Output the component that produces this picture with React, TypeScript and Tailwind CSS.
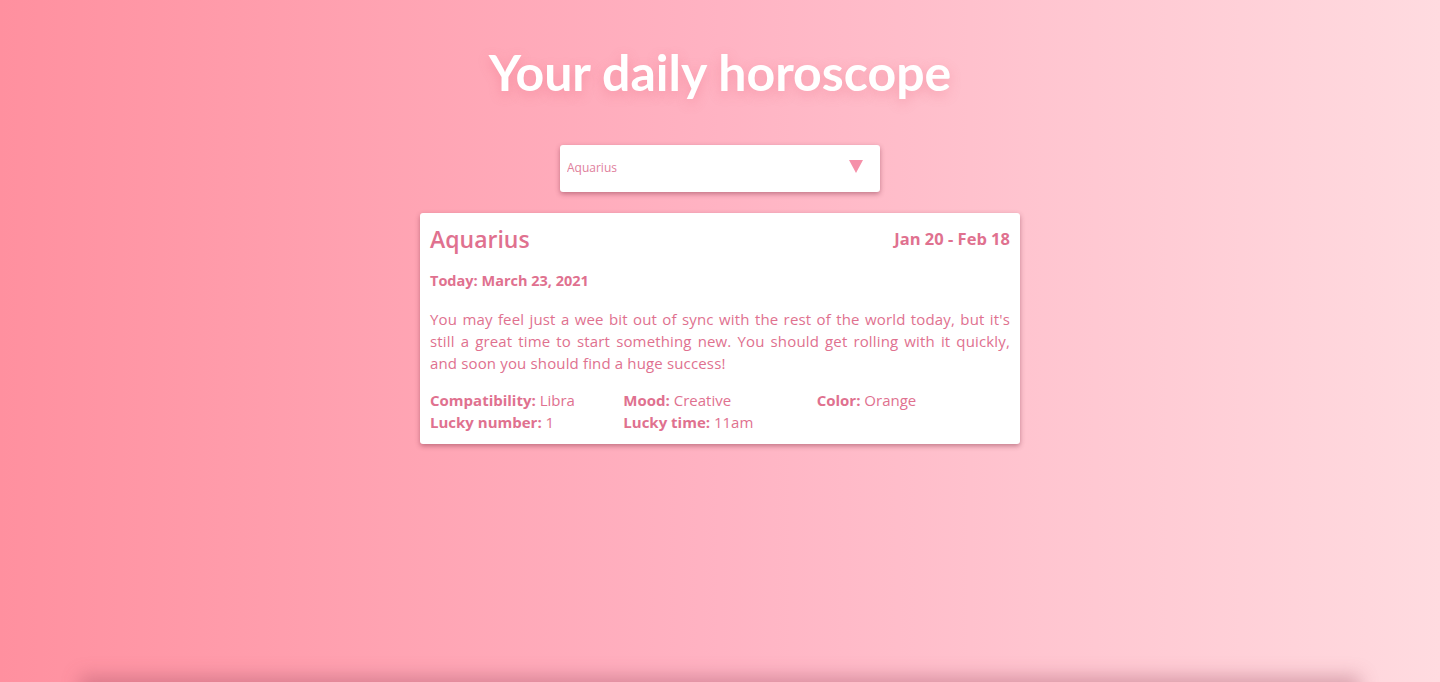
import { useState } from "react";

const signs = [
  "Aries", "Taurus", "Gemini", "Cancer", "Leo", "Virgo",
  "Libra", "Scorpio", "Sagittarius", "Capricorn", "Aquarius", "Pisces",
];

const App = () => {
  const [sign, setSign] = useState("Aquarius");

  return (
    <div
      style={{ fontFamily: "'Open Sans', 'Noto Sans', sans-serif" }}
      className="min-h-screen w-full bg-linear-to-r from-[#ff909f] via-[#ffb3c3] to-[#ffdbe0] text-[#e0718f]"
    >
      <div className="h-[682px] flex flex-col items-center pt-[43px]">
        <h1
          style={{ fontFamily: "Lato, sans-serif" }}
          className="text-[50px] font-bold leading-[58px] text-white [text-shadow:0_4px_12px_rgba(230,100,120,0.35)]"
        >
          Your daily horoscope
        </h1>

        {/* Select */}
        <div className="relative mt-[44px] w-[320px] h-[47px] bg-white rounded-[3px] shadow-[0_2px_5px_rgba(120,40,60,0.45)]">
          <select
            value={sign}
            onChange={(e) => setSign(e.target.value)}
            className="appearance-none w-full h-full bg-transparent pl-[7px] pb-[2px] text-[12px] text-[#e0809c] outline-none"
          >
            {signs.map((s) => (
              <option key={s}>{s}</option>
            ))}
          </select>
          <span className="pointer-events-none absolute right-[17px] top-[15px] w-0 h-0 border-l-[7px] border-r-[7px] border-t-[13px] border-l-transparent border-r-transparent border-t-[#f590a9]" />
        </div>

        {/* Card */}
        <div className="mt-[21px] w-[600px] bg-white rounded-[3px] shadow-[0_2px_5px_rgba(120,40,60,0.45)] px-[10px] pt-[11px] pb-[11px]">
          <div className="flex items-center justify-between">
            <h2 className="text-[23px] font-semibold leading-[30px]">{sign}</h2>
            <span className="text-[16.5px] font-bold">Jan 20 - Feb 18</span>
          </div>
          <p className="mt-[16px] text-[14.5px] font-bold leading-[22px]">Today: March 23, 2021</p>
          <p className="mt-[16px] text-[15px] leading-[22px] text-justify tracking-[0.15px]">
            You may feel just a wee bit out of sync with the rest of the world today, but it's still a great time
            to start something new. You should get rolling with it quickly, and soon you should find a huge success!
          </p>
          <div className="mt-[15px] grid grid-cols-3 w-[580px] text-[15px] leading-[22px]">
            <div><b>Compatibility:</b> Libra</div>
            <div><b>Mood:</b> Creative</div>
            <div><b>Color:</b> Orange</div>
            <div><b>Lucky number:</b> 1</div>
            <div><b>Lucky time:</b> 11am</div>
          </div>
        </div>
      </div>

      {/* Footer peeking below the fold */}
      <div className="mx-[80px] h-[40px] shadow-[0_-6px_18px_rgba(150,70,90,0.35)]" />
    </div>
  );
};

export default App;
